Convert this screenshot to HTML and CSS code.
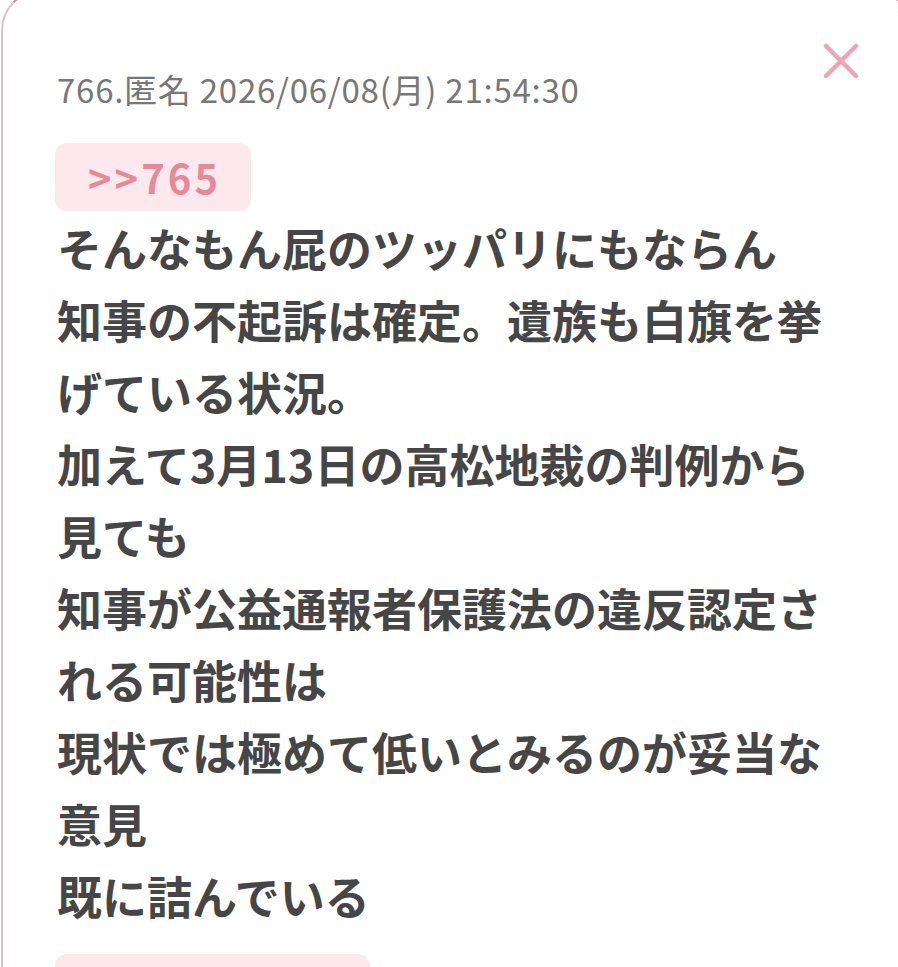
FILE: index.html
```html
<!DOCTYPE html>
<html lang="ja">
<head>
<meta charset="utf-8">
<title>766</title>
<link rel="stylesheet" href="styles.css">
</head>
<body>
<div class="card">
  <button class="close" aria-label="閉じる">
    <svg viewBox="0 0 36 36" width="36" height="36"><path d="M3 3 L33 33 M33 3 L3 33" stroke="#efa3b3" stroke-width="4.5" stroke-linecap="round" fill="none"/></svg>
  </button>
  <div class="meta">766.匿名 2026/06/08(月) 21:54:30</div>
  <div class="anchor">&gt;&gt;765</div>
  <div class="body">そんなもん屁のツッパリにもならん<br>知事の不起訴は確定。遺族も白旗を挙げている状況。<br>加えて3月13日の高松地裁の判例から見ても<br>知事が公益通報者保護法の違反認定される可能性は<br>現状では極めて低いとみるのが妥当な意見<br>既に詰んでいる</div>
  <div class="anchor anchor-next" aria-hidden="true"></div>
</div>
</body>
</html>
```
FILE: styles.css
```css
html, body {
  margin: 0;
  padding: 0;
  background: #ffffff;
  overflow: hidden;
}
body {
  font-family: "Noto Sans CJK JP", "Noto Sans", sans-serif;
}
.card {
  position: relative;
  box-sizing: border-box;
  width: 912px;
  margin: -10px 0 0 1px;
  border: 2px solid #d7c3c9;
  border-top-color: #c98ea0;
  border-radius: 40px;
  padding: 74px 0 40px 52px;
  background: #fff;
}
.close {
  position: absolute;
  top: 51px;
  right: 52px;
  width: 36px;
  height: 36px;
  padding: 0;
  border: 0;
  background: transparent;
  display: flex;
}
.meta {
  font-size: 33px;
  line-height: 46px;
  color: #777777;
  font-weight: 400;
  letter-spacing: 0.75px;
  margin-left: 2px;
}
.anchor {
  display: inline-block;
  margin-top: 31px;
  margin-bottom: 1px;
  height: 68px;
  line-height: 68px;
  padding: 0 30px 0 33px;
  background: #fde9ed;
  border-radius: 12px;
  color: #e8899b;
  font-weight: 700;
  font-size: 40px;
  letter-spacing: 3px;
}
.body {
  width: 780px;
  margin-left: 2px;
  font-size: 45px;
  line-height: 72px;
  font-weight: 700;
  color: #464646;
}
.anchor-next {
  display: block;
  width: 315px;
  padding: 0;
  margin-top: 22px;
}
```
